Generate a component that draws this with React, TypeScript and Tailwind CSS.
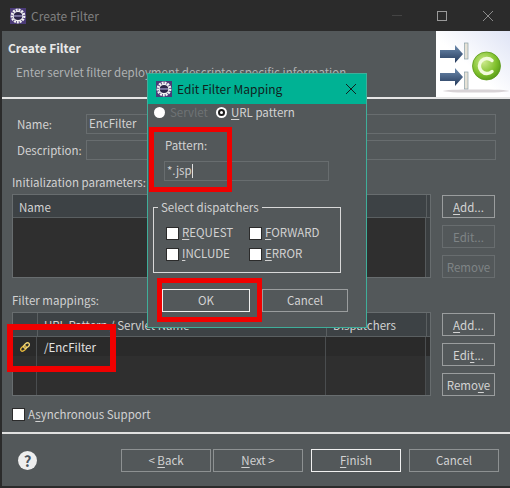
import React from 'react';

const GearIcon: React.FC<{ className?: string }> = ({ className }) => (
  <svg viewBox="0 0 16 16" className={className}>
    <rect x="0" y="0" width="16" height="16" fill="#4b3b78" />
    <circle cx="8" cy="8" r="6.2" fill="none" stroke="#f2f2f2" strokeWidth="2.4" strokeDasharray="2 0.9" />
    <circle cx="8" cy="8" r="5.2" fill="#f4f4f4" />
    <ellipse cx="8" cy="8" rx="4.2" ry="4" fill="#2c2548" />
    <rect x="3.8" y="7.2" width="8.4" height="1.5" fill="#8d86b5" />
  </svg>
);

const Banner: React.FC = () => (
  <svg viewBox="0 0 74 66" className="w-[74px] h-[66px] block">
    <defs>
      <linearGradient id="bg" x1="0" y1="1" x2="1" y2="0">
        <stop offset="0.45" stopColor="#ffffff" />
        <stop offset="1" stopColor="#dfe4f5" />
      </linearGradient>
      <linearGradient id="arrow" x1="0" y1="0" x2="0" y2="1">
        <stop offset="0" stopColor="#6f8db0" />
        <stop offset="1" stopColor="#24395a" />
      </linearGradient>
      <radialGradient id="ball" cx="0.4" cy="0.35" r="0.75">
        <stop offset="0" stopColor="#cdea8c" />
        <stop offset="0.6" stopColor="#7fc02c" />
        <stop offset="1" stopColor="#4c8f12" />
      </radialGradient>
    </defs>
    <rect width="74" height="66" fill="url(#bg)" />
    <ellipse cx="40" cy="60" rx="33" ry="1.6" fill="#d8d3d6" />
    <path d="M4 19h15v-5l8 9-8 9v-5H4z" fill="url(#arrow)" />
    <path d="M4 42h15v-5l8 9-8 9v-5H4z" fill="url(#arrow)" />
    <rect x="28.5" y="12" width="3.5" height="16" fill="#e6e2d6" stroke="#8ba0a8" strokeWidth="0.7" />
    <rect x="28.5" y="41" width="3.5" height="17" fill="#e6e2d6" stroke="#8ba0a8" strokeWidth="0.7" />
    <circle cx="50.5" cy="35" r="14" fill="url(#ball)" stroke="#5d9a1c" strokeWidth="0.8" />
    <path d="M56 29.5a7.5 7.5 0 1 0 0 11" fill="none" stroke="#f2fbdc" strokeWidth="3.4" strokeLinecap="round" />
  </svg>
);

const Mn: React.FC<{ children: React.ReactNode }> = ({ children }) => (
  <span className="underline underline-offset-2 decoration-1">{children}</span>
);

const Btn: React.FC<{ children: React.ReactNode; className?: string }> = ({ children, className }) => (
  <div className={`flex items-center justify-center border box-border ${className ?? ''}`}>
    <span className="relative -top-px">{children}</span>
  </div>
);

const SideButtons: React.FC<{ disabled?: boolean; mt: string }> = ({ disabled, mt }) => {
  const second = disabled ? 'border-[#686d6f] text-[#7f8486]' : 'border-[#9a9d9e] text-[#d4d4d4]';
  return (
    <div className={`flex flex-col gap-[7px] w-[53px] ${mt}`}>
      <Btn className="h-[23px] pt-[2px] border-[#9a9d9e] text-[#d4d4d4]"><Mn>A</Mn>dd...</Btn>
      <Btn className={`h-[23px] pt-[2px] ${second}`}>{disabled ? 'Edit...' : <>Edi<Mn>t</Mn>...</>}</Btn>
      <Btn className={`h-[23px] pt-[2px] ${second}`}>{disabled ? 'Remove' : <>Remo<Mn>v</Mn>e</>}</Btn>
    </div>
  );
};

const Check: React.FC<{ label: React.ReactNode; className?: string }> = ({ label, className }) => (
  <div className={`flex items-center gap-[3px] h-[14px] ${className ?? ''}`}>
    <div className="w-[13px] h-[13px] bg-white border border-[#2b2b2b] box-border shrink-0" />
    <span className="relative -top-px">{label}</span>
  </div>
);

const RedBox: React.FC<{ className: string }> = ({ className }) => (
  <div className={`absolute border-[#f00000] box-border ${className}`} />
);

export default function App() {
  return (
    <div
      className="relative w-[510px] h-[488px] overflow-hidden bg-[#2b2b2b] pl-[2px] pb-[2px] text-[11.5px] leading-[16px] text-[#d2d2d2] flex flex-col"
      style={{ fontFamily: '"Noto Sans CJK KR", "Noto Sans", sans-serif' }}
    >
      {/* title bar */}
      <div className="h-[31px] shrink-0 flex items-center bg-[#2b2b2b] text-[#7f7f7f]">
        <GearIcon className="w-[16px] h-[16px] ml-[8px]" />
        <span className="ml-[5px] text-[12px]">Create Filter</span>
        <div className="ml-auto flex items-center">
          <div className="w-[10px] h-px bg-[#444444] mr-[35px]" />
          <div className="w-[10px] h-[10px] border border-[#9a9a9a] mr-[36px]" />
          <svg viewBox="0 0 10 10" className="w-[10px] h-[10px] mr-[17px]">
            <path d="M0 0L10 10M10 0L0 10" stroke="#8c8c8c" strokeWidth="1" />
          </svg>
        </div>
      </div>

      <div className="flex-1 flex flex-col bg-[#53585a]">
        {/* header */}
        <div className="h-[66px] shrink-0 flex justify-between">
          <div className="pl-[6px] pt-[9px]">
            <div className="font-bold text-[12px] text-[#e8e8e8]">Create Filter</div>
            <div className="ml-[8px] mt-[8px] text-[#b0b3b4]">Enter servlet filter deployment descriptor specific information</div>
          </div>
          <Banner />
        </div>
        <div className="h-[2px] shrink-0 bg-[#e6e6e6]" />

        {/* form */}
        <div className="flex-1 pl-[10px] pr-[13px]">
          <div className="flex items-center mt-[15px] h-[20px]">
            <span className="w-[74px] pl-[5px]">Name:</span>
            <div className="w-[410px] h-[20px] border border-[#686d6f] pl-[2px] leading-[16px]">EncFilter</div>
          </div>
          <div className="flex items-center mt-[6px] h-[20px]">
            <span className="w-[74px] pl-[5px]">Description:</span>
            <div className="w-[410px] h-[20px] border border-[#686d6f]" />
          </div>

          <div className="mt-[12px] h-[20px] leading-[20px]">Initialization parameters:</div>
          <div className="mt-[2px] flex">
            <div className="w-[419px] h-[84px] border border-[#686d6f] box-border flex flex-col">
              <div className="h-[23px] shrink-0 bg-[#3d4245] border-b border-[#5a5f61] grid grid-cols-[414px_1fr]">
                <span className="pl-[6px] leading-[24px] border-r border-[#5a5f61]">Name</span>
              </div>
              <div className="flex-1 bg-[#2f2f2f] grid grid-cols-[413px_1fr]">
                <div className="border-r border-[#55595b]" />
                <div className="bg-[#3a3e40]" />
              </div>
            </div>
            <SideButtons disabled mt="mt-px ml-[11px]" />
          </div>

          <div className="mt-[12px] h-[20px] leading-[20px]">Filter mappings:</div>
          <div className="mt-[2px] flex">
            <div className="w-[419px] h-[84px] border border-[#686d6f] box-border flex flex-col">
              <div className="h-[24px] shrink-0 bg-[#3d4245] border-b border-[#5a5f61] grid grid-cols-[25px_289px_100px_1fr] leading-[24px]">
                <span className="border-r border-[#5a5f61]" />
                <span className="pl-[6px] border-r border-[#5a5f61]">URL Pattern / Servlet Name</span>
                <span className="pl-[6px] border-r border-[#5a5f61]">Dispatchers</span>
              </div>
              <div className="flex-1 bg-[#2f2f2f] flex flex-col">
                <div className="h-[19px] shrink-0 bg-[#2a2a2a] grid grid-cols-[24px_289px_100px_1fr] leading-[20px] text-[#e2e2e2]">
                  <div className="border-r border-[#4a4d4f] flex items-center justify-center">
                    <svg viewBox="0 0 10 10" className="w-[10px] h-[10px] ml-px">
                      <ellipse cx="3.5" cy="6.5" rx="3.2" ry="2" transform="rotate(-40 3.5 6.5)" fill="none" stroke="#e7b93c" strokeWidth="1.3" />
                      <ellipse cx="6.5" cy="3.5" rx="3.2" ry="2" transform="rotate(-40 6.5 3.5)" fill="none" stroke="#f3d777" strokeWidth="1.3" />
                    </svg>
                  </div>
                  <span className="pl-[7px] border-r border-[#4a4d4f]">/EncFilter</span>
                  <span className="border-r border-[#4a4d4f]" />
                </div>
                <div className="flex-1 grid grid-cols-[24px_289px_100px_1fr]">
                  <span className="border-r border-[#4a4d4f]" />
                  <span className="border-r border-[#4a4d4f]" />
                  <span className="border-r border-[#4a4d4f]" />
                  <span className="bg-[#3a3e40]" />
                </div>
              </div>
            </div>
            <SideButtons mt="mt-px ml-[11px]" />
          </div>

          <div className="mt-[11px] flex items-center gap-[3px] h-[14px]">
            <div className="w-[13px] h-[13px] bg-white border border-[#2b2b2b] box-border" />
            <span>A<Mn>s</Mn>ynchronous Support</span>
          </div>
        </div>

        {/* footer */}
        <div className="h-[2px] shrink-0 bg-[#e0e0e0]" />
        <div className="h-[52px] shrink-0 flex items-start pt-[15px] pl-[16px]">
          <div className="w-[19px] h-[19px] mt-[2px] rounded-full bg-[#eeeeee] flex items-center justify-center text-[#4a5560] text-[15px] font-bold">?</div>
          <div className="ml-[84px] flex">
            <Btn className="w-[90px] h-[23px] border-[#8d9192]">&lt; <Mn>B</Mn>ack</Btn>
            <Btn className="w-[90px] h-[23px] ml-[2px] border-[#8d9192]"><Mn>N</Mn>ext &gt;</Btn>
            <Btn className="w-[90px] h-[23px] ml-[8px] border-[#f0f0f0]"><Mn>F</Mn>inish</Btn>
            <Btn className="w-[90px] h-[23px] ml-[8px] border-[#8d9192]">Cancel</Btn>
          </div>
        </div>
      </div>

      {/* Edit Filter Mapping dialog */}
      <div className="absolute left-[147px] top-[73px] w-[220px] h-[255px] box-border border border-[#3fae9a] bg-[#53585a] flex flex-col">
        <div className="h-[30px] shrink-0 bg-[#00b294] flex items-center text-[#10221e] text-[12px]">
          <GearIcon className="w-[16px] h-[16px] ml-[8px]" />
          <span className="ml-[5px]">Edit Filter Mapping</span>
          <svg viewBox="0 0 10 10" className="w-[10px] h-[10px] ml-auto mr-[10px]">
            <path d="M0 0L10 10M10 0L0 10" stroke="#10221e" strokeWidth="1" />
          </svg>
        </div>
        <div className="flex items-center h-[16px] pl-[6px]">
          <div className="w-[11px] h-[11px] rounded-full bg-white" />
          <span className="ml-[5px] w-[46px] text-[#6f7375]">Servlet</span>
          <div className="w-[11px] h-[11px] rounded-full bg-white flex items-center justify-center">
            <div className="w-[7px] h-[7px] rounded-full bg-white border-2 border-[#1d1d1d]" />
          </div>
          <span className="ml-[4px]"><Mn>U</Mn>RL pattern</span>
        </div>
        <div className="ml-[17px] mt-[17px]">Pattern:</div>
        <div className="ml-[16px] mt-[8px] w-[165px] h-[20px] border border-[#686d6f] pl-[2px] leading-[16px]">
          *.jsp<span className="inline-block w-px h-[14px] bg-[#e0e0e0] align-[-3px]" />
        </div>
        <fieldset className="ml-[5px] mt-[18px] w-[188px] h-[74px] border border-[#d8d8d8] box-border px-[12px]">
          <legend className="ml-[-8px] px-[3px]">Select dispatchers</legend>
          <div className="grid grid-cols-[83px_1fr] gap-y-[7px] mt-[11px]">
            <Check label={<><Mn>R</Mn>EQUEST</>} />
            <Check label={<><Mn>F</Mn>ORWARD</>} />
            <Check label={<><Mn>I</Mn>NCLUDE</>} />
            <Check label={<><Mn>E</Mn>RROR</>} />
          </div>
        </fieldset>
        <div className="flex ml-[14px] mt-[16px]">
          <Btn className="w-[88px] h-[23px] border-[#f0f0f0]">OK</Btn>
          <Btn className="w-[86px] h-[23px] ml-[12px] border-[#9a9d9e]">Cancel</Btn>
        </div>
      </div>

      {/* red annotations */}
      <RedBox className="left-[149px] top-[127px] w-[83px] h-[65px] border-[5px]" />
      <RedBox className="left-[157px] top-[278px] w-[105px] h-[44px] border-[5px]" />
      <RedBox className="left-[7px] top-[324px] w-[109px] h-[48px] border-[6px]" />
    </div>
  );
}
